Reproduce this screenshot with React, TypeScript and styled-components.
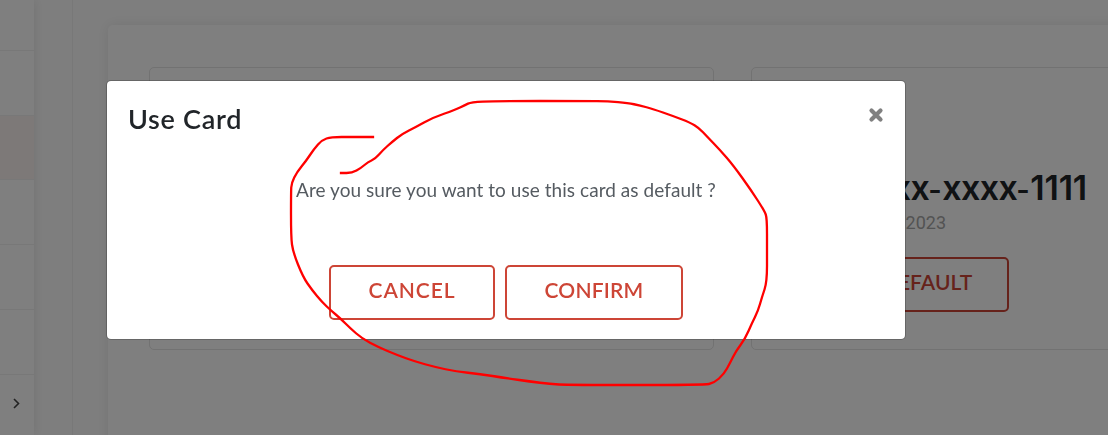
import React from "react";
import styled, { createGlobalStyle } from "styled-components";

const GlobalStyle = createGlobalStyle`
  *, *::before, *::after { box-sizing: border-box; }
  body {
    margin: 0;
    background: #fdfdfd;
    font-family: Lato, "Liberation Sans", sans-serif;
    color: #212529;
    overflow: hidden;
  }
`;

const Page = styled.div`
  display: flex;
  height: 435px;
  overflow: hidden;
`;

const Sidebar = styled.nav`
  flex: 0 0 34px;
  background: #fff;
  box-shadow: 1px 0 10px rgba(0, 0, 0, 0.09);
`;

const SidebarRow = styled.div<{ $height: number; $active?: boolean }>`
  height: ${(p) => p.$height}px;
  border-bottom: 1px solid #f0f0f0;
  background: ${(p) => (p.$active ? "#fbf2f1" : "transparent")};
  padding: 22px 0 0 12px;
`;

const Chevron = styled.svg`
  display: block;
  width: 9px;
  height: 13px;
`;

const Gutter = styled.div`
  flex: 0 0 39px;
  border-right: 1px solid #f1f1f1;
`;

const Main = styled.main`
  flex: 1;
  min-width: 0;
  padding: 25px 0 0 35px;
`;

const Panel = styled.section`
  display: flex;
  gap: 37px;
  width: 1260px;
  height: 500px;
  padding: 42px 41px;
  border-radius: 5px;
  background: #fff;
  box-shadow: 0 0 14px rgba(0, 0, 0, 0.09);
`;

const PaymentCard = styled.article`
  flex: 0 0 565px;
  height: 283px;
  border: 1px solid #e4e4e4;
  border-radius: 5px;
  padding-top: 98px;
`;

const Line = styled.div<{ $width: number; $height: number }>`
  display: flex;
  justify-content: flex-end;
  width: ${(p) => p.$width}px;
  height: ${(p) => p.$height}px;
  white-space: nowrap;
`;

const CardNumber = styled.h2`
  margin: 0;
  font: 600 34px/44px Inter, sans-serif;
  letter-spacing: -0.6px;
`;

const Digits = styled.span`
  letter-spacing: -0.2px;
`;

const Dash = styled.span`
  display: inline-block;
  width: 13px;
  text-indent: -1px;
  font-size: 29px;
`;

const Expiry = styled.span`
  font: 400 18px/24px Roboto, sans-serif;
  color: #a6a6a6;
`;

const OutlineButton = styled.button<{ $width: number; $spacing?: number }>`
  width: ${(p) => p.$width}px;
  height: 55px;
  padding: 0 0 5px;
  border: 2px solid #cd4536;
  border-radius: 5px;
  background: transparent;
  color: #cd4536;
  font: 600 21px/24px Lato, sans-serif;
  letter-spacing: ${(p) => p.$spacing ?? 0}px;
`;

const Backdrop = styled.div`
  position: fixed;
  inset: 0;
  background: rgba(0, 0, 0, 0.5);
  padding: 80px 0 0 106px;
`;

const Dialog = styled.div`
  width: 800px;
  height: 260px;
  border: 1px solid rgba(0, 0, 0, 0.2);
  border-radius: 5px;
  background: #fff;
  background-clip: padding-box;
`;

const DialogHeader = styled.header`
  display: flex;
  justify-content: space-between;
  height: 96px;
  padding: 22px 21px 0 21px;
`;

const Title = styled.h1`
  margin: 0;
  font-size: 27px;
  line-height: 31px;
  font-weight: 600;
  letter-spacing: 0.7px;
`;

const CloseIcon = styled.svg`
  width: 16px;
  height: 16px;
  margin-top: 4px;
`;

const Question = styled.p`
  margin: 0;
  height: 88px;
  font-size: 19px;
  line-height: 26px;
  letter-spacing: 0.05px;
  color: #555b61;
  text-align: center;
`;

const Actions = styled.div`
  display: flex;
  justify-content: center;
  gap: 10px;
`;

const Annotation = styled.svg`
  position: fixed;
  inset: 0;
  width: 1108px;
  height: 435px;
  pointer-events: none;
`;

const rows = [51, 65, 64, 65, 65, 65];

const stroke: [number, number][] = [
  [373, 137], [352, 137], [331, 137], [322, 140], [314, 149], [306, 161], [297, 172], [291.5, 183],
  [291, 192], [291, 237], [293, 252], [303, 277], [312, 290], [322, 302], [331, 310.5],
  [341, 319], [350, 328], [362, 338.5], [378, 347], [397, 355], [415, 361.5], [435, 367],
  [456, 371.5], [480, 374], [505, 378], [530, 381.5], [550, 384], [568, 385], [704, 385],
  [714, 383], [724, 374], [730, 363], [736, 351], [745, 339], [752, 323], [758, 311],
  [762, 297], [767, 282], [767, 250], [767, 218], [764.5, 211], [751, 190], [733, 165], [720, 150],
  [707, 136.5], [699, 128], [690, 122.5], [673, 116], [653, 109], [640, 105.5], [628, 103],
  [608, 101.2], [586, 101], [495, 101], [471, 102.2], [465, 105], [455, 110], [433, 117.5], [415, 127.5],
  [402, 134], [392, 142], [383, 150], [375, 159], [368, 162], [361, 168], [352, 173], [341, 173],
];

function smooth(points: [number, number][]) {
  let d = `M${points[0][0]} ${points[0][1]}`;
  for (let i = 1; i < points.length - 1; i++) {
    const [x, y] = points[i];
    const [nx, ny] = points[i + 1];
    d += ` Q${x} ${y} ${(x + nx) / 2} ${(y + ny) / 2}`;
  }
  const [lx, ly] = points[points.length - 1];
  return `${d} L${lx} ${ly}`;
}

export default function App() {
  return (
    <>
      <GlobalStyle />
      <Page>
        <Sidebar>
          {rows.map((height, i) => (
            <SidebarRow key={i} $height={height} $active={i === 2} />
          ))}
          <SidebarRow $height={65}>
            <Chevron viewBox="0 0 9 13">
              <path d="M2 2l4.5 4.5L2 11" fill="none" stroke="#444" strokeWidth="1.6" />
            </Chevron>
          </SidebarRow>
        </Sidebar>
        <Gutter />
        <Main>
          <Panel>
            <PaymentCard />
            <PaymentCard>
              <Line $width={335} $height={45}>
                <CardNumber>
                  xxxx<Dash>-</Dash>xxxx<Dash>-</Dash>xxxx<Dash>-</Dash>
                  <Digits>1111</Digits>
                </CardNumber>
              </Line>
              <Line $width={194} $height={46}>
                <Expiry>2023</Expiry>
              </Line>
              <Line $width={257} $height={55}>
                <OutlineButton $width={205} $spacing={0.1}>SET DEFAULT</OutlineButton>
              </Line>
            </PaymentCard>
          </Panel>
        </Main>
      </Page>
      <Backdrop>
        <Dialog role="dialog">
          <DialogHeader>
            <Title>Use Card</Title>
            <CloseIcon viewBox="0 0 16 16">
              <path d="M3.5 3.5l9 9M12.5 3.5l-9 9" stroke="#808080" strokeWidth="4.2" strokeLinecap="round" />
            </CloseIcon>
          </DialogHeader>
          <Question>Are you sure you want to use this card as default ?</Question>
          <Actions>
            <OutlineButton $width={166} $spacing={0.9}>CANCEL</OutlineButton>
            <OutlineButton $width={178} $spacing={0.2}>CONFIRM</OutlineButton>
          </Actions>
        </Dialog>
      </Backdrop>
      <Annotation viewBox="0 0 1108 435">
        <path d={smooth(stroke)} fill="none" stroke="#f00" strokeWidth="2.3" strokeLinecap="square" />
      </Annotation>
    </>
  );
}
